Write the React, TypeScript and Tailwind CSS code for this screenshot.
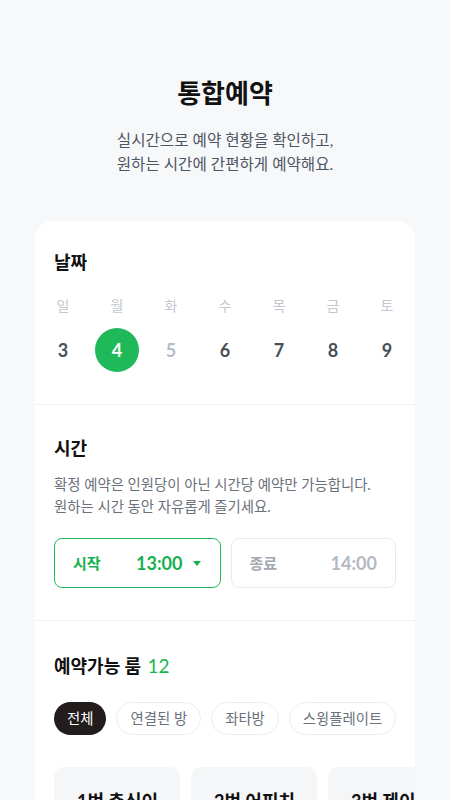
import React, { useState } from 'react';

const days = [
  { label: '일', date: 3 },
  { label: '월', date: 4 },
  { label: '화', date: 5, disabled: true },
  { label: '수', date: 6 },
  { label: '목', date: 7 },
  { label: '금', date: 8 },
  { label: '토', date: 9 },
];

const filters = ['전체', '연결된 방', '좌타방', '스윙플레이트'];

const rooms = ['1번 춘식이', '2번 어피치', '3번 제이지', '4번 라이언'];

const App: React.FC = () => {
  const [selected, setSelected] = useState(4);
  const [filter, setFilter] = useState(0);

  return (
    <div
      className="min-h-screen bg-[#f7f8fa] pt-[74px]"
      style={{ fontFamily: 'Lato, "Noto Sans CJK KR", sans-serif' }}
    >
      {/* Header */}
      <div className="text-center">
        <h1 className="text-[26px] font-bold leading-[38px] text-[#111]">통합예약</h1>
        <p className="mt-[16px] text-[15.6px] leading-[24px] text-[#4e5562]">
          실시간으로 예약 현황을 확인하고,
          <br />
          원하는 시간에 간편하게 예약해요.
        </p>
      </div>

      <div className="mx-[35px] mt-[45px] overflow-hidden rounded-[18px] bg-white">
        {/* Date */}
        <section className="px-[19px] pt-[28px] pb-[32px]">
          <h2 className="text-[18px] font-bold leading-[26px] text-[#111]">날짜</h2>
          <div className="mt-[21px] flex justify-between">
            {days.map((d) => (
              <button
                key={d.date}
                onClick={() => !d.disabled && setSelected(d.date)}
                className="flex w-[18px] flex-col items-center"
              >
                <span className="text-[14px] leading-[20px] text-[#c2c7cf]">{d.label}</span>
                <span
                  className={`mt-[12px] flex h-[44px] w-[44px] shrink-0 items-center justify-center rounded-full text-[18px] font-bold ${
                    selected === d.date
                      ? 'bg-[#20b95a] text-white'
                      : d.disabled
                        ? 'text-[#b7bdc6]'
                        : 'text-[#4a5059]'
                  }`}
                >
                  {d.date}
                </span>
              </button>
            ))}
          </div>
        </section>

        <div className="h-px bg-[#f0f1f3]" />

        {/* Time */}
        <section className="px-[19px] pt-[30px] pb-[32px]">
          <h2 className="text-[18px] font-bold leading-[26px] text-[#111]">시간</h2>
          <p className="mt-[13px] text-[14.4px] leading-[22px] text-[#6b717b]">
            확정 예약은 인원당이 아닌 시간당 예약만 가능합니다.
            <br />
            원하는 시간 동안 자유롭게 즐기세요.
          </p>
          <div className="mt-[20px] flex gap-[10px]">
            <button className="flex h-[50px] flex-1 items-center rounded-[8px] border border-[#20b95a] pl-[18px] pr-[19px]">
              <span className="text-[15px] font-bold text-[#16b04e]">시작</span>
              <span className="ml-auto text-[18px] font-bold text-[#16b04e]">13:00</span>
              <svg className="ml-[10px]" width="8" height="5" viewBox="0 0 8 5">
                <path d="M0 0h8L4 5z" fill="#16b04e" />
              </svg>
            </button>
            <button className="flex h-[50px] flex-1 items-center rounded-[8px] border border-[#e8eaed] pl-[18px] pr-[18px]">
              <span className="text-[15px] font-bold text-[#a2a8b1]">종료</span>
              <span className="ml-auto text-[18px] font-bold text-[#b3b9c2]">14:00</span>
            </button>
          </div>
        </section>

        <div className="h-px bg-[#f0f1f3]" />

        {/* Rooms */}
        <section className="pt-[32px] pb-[30px]">
          <h2 className="px-[19px] text-[18px] font-bold leading-[26px] text-[#111]">
            예약가능 룸 <span className="ml-[2px] text-[19px] font-normal text-[#16b84e]">12</span>
          </h2>
          <div className="mt-[23px] flex gap-[10px] overflow-hidden px-[19px]">
            {filters.map((f, i) => (
              <button
                key={f}
                onClick={() => setFilter(i)}
                className={`h-[33px] shrink-0 rounded-full px-[13px] text-[14.4px] ${
                  filter === i
                    ? 'bg-[#221c1c] text-white'
                    : 'border border-[#eceef0] text-[#6b717b]'
                }`}
              >
                {f}
              </button>
            ))}
          </div>
          <div className="mt-[32px] flex gap-[11px] overflow-hidden px-[19px]">
            {rooms.map((r) => (
              <div key={r} className="h-[150px] w-[126px] shrink-0 rounded-[10px] bg-[#f5f6f8] px-[23px] pt-[22px]">
                <div className="whitespace-nowrap text-[18px] font-bold leading-[24px] text-[#111]">{r}</div>
              </div>
            ))}
          </div>
        </section>
      </div>
    </div>
  );
};

export default App;
